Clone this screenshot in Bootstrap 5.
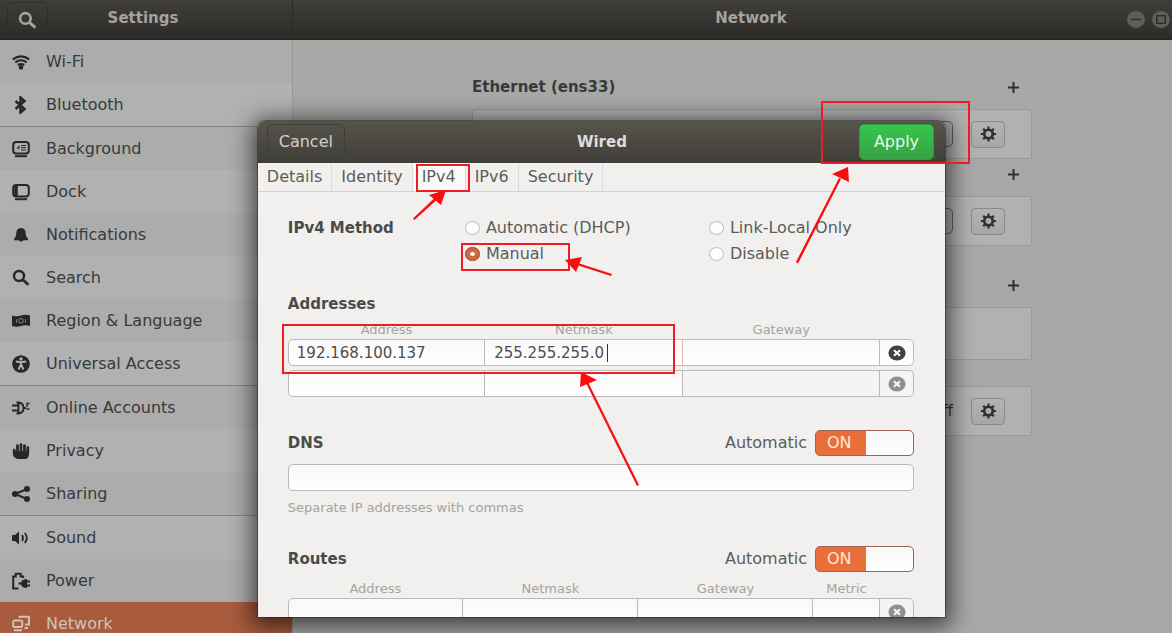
<!DOCTYPE html>
<html lang="en">
<head>
<meta charset="utf-8">
<meta name="viewport" content="width=device-width, initial-scale=1">
<title>Settings - Network</title>
<link href="https://cdn.jsdelivr.net/npm/bootstrap@5.3.0/dist/css/bootstrap.min.css" rel="stylesheet">
<style>
  body { font-family: "DejaVu Sans", "Noto Sans", sans-serif; font-size: 16px; line-height: 26px; color: #38393a; background: #a8a8a6; }
  .titlebar { height: 40px; background: linear-gradient(#403e39, #2c2b28); border-bottom: 1px solid #23221f; color: #a5a39d; }
  .titlebar .split { border-right: 1px solid #2b2a27; padding-left: 7px; }
  .titlebar h1, .titlebar h2, .dlg-head h2 { font-size: 15px; line-height: 26px; font-weight: 700; }
  .titlebar h1 { padding: 0 54px 8px 0; }
  .titlebar h1, .titlebar h2 { padding-bottom: 4px; }
  .titlebar h2 { padding-left: 82px; }
  .find-btn { width: 41px; height: 36px; border: 1px solid #2f2e2a; border-radius: 5px; color: #a5a39d; background: none; }
  .win-btn { width: 18px; height: 17px; border-radius: 50%; border: 0; background: #5f5d58; color: #2d2c28; }
  .wins { gap: 7px; padding-right: 2px; }
  .side { background: #b1b1b1; border-right: 1px solid #999997; }
  .side a { height: 43px; padding: 0 12px; gap: 16px; color: #38393a; text-decoration: none; }
  .side a:nth-of-type(odd) { background: #acacac; }
  .side a svg { width: 18px; height: 18px; flex: none; color: #252627; }
  .side hr { margin: 0; border-top: 1px solid #858585; opacity: 1; }
  .side a.current { background: #a85b3d; color: #d0c2bb; }
  .side a.current svg { color: #d0c2bb; }
  .pane { padding: 34px 0 0 39px; }
  .pane-in { width: 560px; }
  .sec-head { height: 35px; padding-right: 9px; }
  .sec-head h3 { font-size: 15px; line-height: 26px; font-weight: 700; }
  .near { margin-top: 2px; }
  .far { margin-top: 26px; }
  .plus-btn { width: 20px; height: 20px; border: 0; background: none; color: #303030; }
  .panel { height: 50px; background: #b1b1b1; border: 1px solid #999997; border-radius: 2px; padding-right: 26px; gap: 18px; }
  .panel.tall { height: 53px; }
  .gear-btn { width: 34px; height: 27px; border: 1px solid #8a8a88; border-radius: 4px; background: linear-gradient(#b3b3b2, #a7a7a6); color: #303030; }
  .gear-btn svg { width: 17px; height: 16px; }
  .dim-switch { appearance: none; width: 99px; height: 26px; margin: 0; border: 1px solid #6b5c59; border-radius: 5px; background: #adadac; }
  .overlay { top: 121px; bottom: 16px; left: 22%; right: 227px; }
  .dlg { height: 100%; background: #f1f0ee; border-radius: 7px 7px 0 0; box-shadow: 0 4px 22px 6px rgba(0,0,0,.6), 0 0 0 1px rgba(60,60,56,.5); }
  .dlg-head { height: 42px; padding: 0 11px 0 9px; background: linear-gradient(#57544b, #403e39); color: #e0ddd7; }
  .cancel-btn, .apply-btn { height: 36px; font-size: 16px; line-height: 24px; border-radius: 5px; }
  .cancel-btn { width: 78px; border: 1px solid #403e38; color: #d3d0c9; background: none; }
  .apply-btn { width: 75px; border: 1px solid #309a40; color: #e9f8ea; background: linear-gradient(#36c64c, #37a146); }
  .tabs { height: 29px; border-bottom: 1px solid #d5d3d0; }
  .tabs button { border: 0; border-right: 1px solid #dddbd8; background: none; padding: 0 9px; color: #5c5d5b; line-height: 28px; }
  .tabs button.on { background: #fafafa; }
  .sheet { padding: 23px 31px 0 30px; color: #5b5c5a; }
  .sheet h3 { font-size: 15px; line-height: 26px; font-weight: 700; color: #4a4b49; margin: 0; }
  .method { display: grid; grid-template-columns: 177fr 244fr 205fr; }
  .method label { gap: 6px; }
  .method input { appearance: none; width: 15px; height: 14px; margin: 0; border: 1px solid #c4c2be; border-radius: 50%; background: #fdfdfd; }
  .method input:checked { border: 5px solid #c96a3f; outline: 1px solid #b05a34; outline-offset: -1px; }
  .sheet h3.gap-sec { margin-top: 24px; }
  .row-sec { margin-top: 29px; }
  .addr, .routes { display: grid; }
  .addr { grid-template-columns: 1fr 1fr 1fr 34px; }
  .routes { grid-template-columns: 1fr 1fr 1fr 67px 34px; }
  .heads { font-size: 13px; line-height: 18px; color: #a3a49d; text-align: center; }
  .hint { font-size: 13px; line-height: 18px; color: #a3a49d; }
  .cells > *, .dns-in { min-width: 0; width: 100%; height: 27px; border: 1px solid #bcbab6; background: linear-gradient(#f8f8f8, #fff); color: #4c4d4c; padding: 0 8px; font-size: 15px; }
  .cells > * + * { border-left: 0; }
  .cells > :first-child { border-radius: 5px 0 0 5px; }
  .cells > :last-child { border-radius: 0 5px 5px 0; padding: 0; color: #3f4040; }
  .cells > .off { background: #f4f4f4; }
  .cells > .off:last-child { color: #8f8f8d; }
  .cells > .hot { border-color: #eeb49d; padding: 0; }
  .hot input { display: block; border: 0; background: none; width: 100%; height: 25px; padding: 0 9px; color: #4c4d4c; font-size: 15px; }
  .hot input:focus { outline: 0; }
  .caret { left: 122px; top: 4px; width: 1px; height: 18px; background: #333; }
  .dns-in { border-radius: 5px; }
  .sw input { appearance: none; display: block; margin: 0; width: 99px; height: 26px; border: 1px solid #9a6650; border-radius: 5px; background: linear-gradient(#f7f7f6, #fff) right / 47px 100% no-repeat, #e96f3a; }
  .sw span { left: 12px; top: 0; color: #fbe6da; }
  .notes { pointer-events: none; overflow: visible; fill: none; stroke: #ee1c25; stroke-width: 2; }
  .notes path { fill: #fb0d0d; stroke: none; }
</style>
</head>
<body class="vh-100 overflow-hidden">
<svg class="d-none">
  <symbol id="gear" viewBox="0 0 18 18"><circle cx="9" cy="9" r="4.800" fill="none" stroke="currentColor" stroke-width="3"/><g stroke="currentColor" stroke-width="2.400"><path d="M9 .5v3M9 14.500v3M.5 9h3M14.500 9h3M3 3l2.200 2.200M12.800 12.800L15 15M3 15l2.200-2.200M12.800 5.200L15 3"/></g></symbol>
  <symbol id="plus" viewBox="0 0 14 14"><path d="M7 1v12M1 7h12" stroke="currentColor" stroke-width="2.200"/></symbol>
  <symbol id="lens" viewBox="0 0 18 18"><circle cx="7" cy="7" r="5" fill="none" stroke="currentColor" stroke-width="2.400"/><path d="M10.800 10.800l5.600 5" stroke="currentColor" stroke-width="2.800"/></symbol>
  <symbol id="del" viewBox="0 0 18 16"><ellipse cx="9" cy="8" rx="8.600" ry="7.500" fill="currentColor"/><path d="M6 5.300l6 5.400M12 5.300l-6 5.400" stroke="#f6f6f6" stroke-width="2.200"/></symbol>
</svg>
<div class="d-flex flex-column h-100">
  <header class="titlebar d-flex flex-shrink-0">
    <div class="col-3 split d-flex align-items-center">
      <button class="find-btn p-0" type="button" aria-label="Search"><svg width="19" height="19"><use href="#lens"/></svg></button>
      <h1 class="m-0 flex-fill text-center">Settings</h1>
    </div>
    <div class="flex-fill d-flex align-items-center">
      <h2 class="m-0 flex-fill text-center">Network</h2>
      <div class="wins d-flex">
        <button class="win-btn p-0 d-flex" type="button" aria-label="Minimize"><svg viewBox="0 0 19 17"><path d="M4.500 8.500h10" stroke="currentColor" stroke-width="1.500"/></svg></button>
        <button class="win-btn p-0 d-flex" type="button" aria-label="Maximize"><svg viewBox="0 0 19 17"><rect x="5" y="4.500" width="9" height="8" fill="none" stroke="currentColor" stroke-width="1.500"/></svg></button>
      </div>
    </div>
  </header>
  <div class="d-flex flex-fill overflow-hidden">
    <nav class="side col-3">
      <a class="d-flex align-items-center" href="#"><svg viewBox="0 0 18 18" fill="none" stroke="currentColor" stroke-width="2.100"><path d="M.8 6.400Q9 .4 17.200 6.400M3.300 9.300q5.700-4 11.400 0M5.800 12q3.200-2 6.400 0"/><circle cx="9" cy="14.300" r="1.300" fill="currentColor"/></svg>Wi-Fi</a>
      <a class="d-flex align-items-center" href="#"><svg viewBox="0 0 18 18" fill="none" stroke="currentColor" stroke-width="2.500"><path d="M3.500 5l9 8-4 3.500V1.500l4 3.500-9 8"/></svg>Bluetooth</a>
      <hr>
      <a class="d-flex align-items-center" href="#"><svg viewBox="0 0 18 18" fill="none" stroke="currentColor" stroke-width="2"><rect x="1.200" y="2" width="15.600" height="11.500" rx="3"/><path d="M3 16.200h12"/><path d="M5 9l2-3v3M9 5.500h5M9 7.700h5M9 10h5" stroke-width="1"/></svg>Background</a>
      <a class="d-flex align-items-center" href="#"><svg viewBox="0 0 18 18" fill="none" stroke="currentColor" stroke-width="2"><rect x="1.200" y="2" width="15.600" height="11.500" rx="3"/><path d="M3 16.200h12"/><path d="M4 3v10" stroke-width="3.500"/></svg>Dock</a>
      <a class="d-flex align-items-center" href="#"><svg viewBox="0 0 18 18" fill="currentColor"><path d="M9 2c3.800 0 4.600 3 4.800 6 .1 2.500.9 3.500 2.200 4.800v1.400h-4.500Q9 17 6.500 14.200H2v-1.400C3.300 11.500 4.100 10.500 4.200 8c.2-3 1-6 4.800-6z"/></svg>Notifications</a>
      <a class="d-flex align-items-center" href="#"><svg><use href="#lens"/></svg>Search</a>
      <a class="d-flex align-items-center" href="#"><svg viewBox="0 0 18 18"><path d="M0 3.500q4 1.500 9 0t9 0v10.500q-4-1.500-9 0t-9 0z" fill="currentColor"/><circle cx="9" cy="8.800" r="2.300" fill="none" stroke="#888"/><path d="M4.500 7v4M13.500 7v4" stroke="#777"/></svg>Region &amp; Language</a>
      <a class="d-flex align-items-center" href="#"><svg viewBox="0 0 18 18"><circle cx="9" cy="9" r="8.800" fill="currentColor"/><circle cx="9" cy="4" r="1.700" fill="#b1b1b1"/><path d="M3.800 6.500L9 7.200l5.200-.7M9 7v3.500M9 9.500l-2.500 5M9 9.500l2.500 5" stroke="#b1b1b1" stroke-width="2" fill="none"/></svg>Universal Access</a>
      <hr>
      <a class="d-flex align-items-center" href="#"><svg viewBox="0 0 18 18" fill="none" stroke="currentColor" stroke-width="1.900"><path d="M4.500 3.500h2q5 .5 5 5.500t-5 5.500h-2M6.500 3v12M0 6.500h6M0 11.500h6M11 9h3"/><path d="M17.500 4.500H15V8M17.500 10h-3" stroke-width="1.400"/></svg>Online Accounts</a>
      <a class="d-flex align-items-center" href="#"><svg viewBox="0 0 18 18" fill="none" stroke="currentColor" stroke-width="2.700" stroke-linecap="round"><path d="M5.500 10V3.500M9 10V2.500M12.500 10V3.500M15.800 11V5.500M2.200 8v4"/><path d="M1 9h16v4q-1 4-4 4H6q-4-1-5-4z" fill="currentColor" stroke="none"/></svg>Privacy</a>
      <a class="d-flex align-items-center" href="#"><svg viewBox="0 0 18 18" fill="currentColor"><path d="M15 4L3 9l12 5" fill="none" stroke="currentColor" stroke-width="2"/><circle cx="3" cy="9" r="3"/><circle cx="15" cy="4" r="3"/><circle cx="15" cy="14" r="3"/></svg>Sharing</a>
      <hr>
      <a class="d-flex align-items-center" href="#"><svg viewBox="0 0 18 18" fill="none" stroke="currentColor" stroke-width="1.800"><path d="M0 6h3l4-3.500v13L3 12H0z" fill="currentColor" stroke="none"/><path d="M10 6q2 3 0 6M12.800 4q4 5 0 10"/></svg>Sound</a>
      <a class="d-flex align-items-center" href="#"><svg viewBox="0 0 18 18" fill="none" stroke="currentColor" stroke-width="2"><path d="M6.500 16.500H1.200V4.500h2.500V1.800h5v2.700h2.500V6"/><path d="M15 7v9q-5 0-6-3.500H6.500v-2H9Q10 7 15 7z" fill="currentColor" stroke="none"/><path d="M14 9.500h4M14 13.500h4" stroke-width="1.800"/></svg>Power</a>
      <a class="d-flex align-items-center current" href="#"><svg viewBox="0 0 18 18" fill="none" stroke="currentColor" stroke-width="2"><rect x="1.200" y="5.500" width="9" height="6.500" rx="1.500"/><path d="M7.500 3V1.800H17V9.500h-4M2 15.200h8M12.500 13h3.500"/></svg>Network</a>
    </nav>
    <main class="pane flex-fill">
      <div class="pane-in mx-auto">
        <div class="sec-head d-flex justify-content-between"><h3 class="m-0">Ethernet (ens33)</h3><button class="plus-btn p-0" type="button" aria-label="Add Ethernet profile"><svg width="13" height="13"><use href="#plus"/></svg></button></div>
        <div class="panel d-flex align-items-center justify-content-end"><input class="dim-switch" type="checkbox" role="switch" aria-label="Ethernet connection"><button class="gear-btn p-0 d-flex align-items-center justify-content-center" type="button" aria-label="Ethernet options"><svg><use href="#gear"/></svg></button></div>
        <div class="sec-head near d-flex justify-content-end"><button class="plus-btn p-0" type="button" aria-label="Add connection"><svg width="13" height="13"><use href="#plus"/></svg></button></div>
        <div class="panel d-flex align-items-center justify-content-end"><input class="dim-switch" type="checkbox" role="switch" aria-label="Second connection"><button class="gear-btn p-0 d-flex align-items-center justify-content-center" type="button" aria-label="Connection options"><svg><use href="#gear"/></svg></button></div>
        <div class="sec-head far d-flex justify-content-end"><button class="plus-btn p-0" type="button" aria-label="Add VPN"><svg width="13" height="13"><use href="#plus"/></svg></button></div>
        <div class="panel tall"></div>
        <div class="panel far d-flex align-items-center justify-content-end"><span>Off</span><button class="gear-btn p-0 d-flex align-items-center justify-content-center" type="button" aria-label="Proxy options"><svg><use href="#gear"/></svg></button></div>
      </div>
    </main>
  </div>
</div>

<div class="overlay position-absolute">
  <form class="dlg overflow-hidden" role="dialog" aria-label="Wired">
    <div class="dlg-head d-flex align-items-center justify-content-between">
      <button class="cancel-btn p-0" type="button">Cancel</button>
      <h2 class="m-0">Wired</h2>
      <button class="apply-btn p-0" type="button">Apply</button>
    </div>
    <div class="tabs d-flex" role="tablist">
      <button type="button" role="tab">Details</button><button type="button" role="tab">Identity</button><button class="on" type="button" role="tab" aria-selected="true">IPv4</button><button type="button" role="tab">IPv6</button><button type="button" role="tab">Security</button>
    </div>
    <div class="sheet">
      <div class="method">
        <h3>IPv4 Method</h3>
        <div>
          <label class="d-flex align-items-center"><input type="radio" name="m">Automatic (DHCP)</label>
          <label class="d-flex align-items-center"><input type="radio" name="m" checked>Manual</label>
        </div>
        <div>
          <label class="d-flex align-items-center"><input type="radio" name="m">Link-Local Only</label>
          <label class="d-flex align-items-center"><input type="radio" name="m">Disable</label>
        </div>
      </div>
      <h3 class="gap-sec">Addresses</h3>
      <div class="addr heads mt-1"><span>Address</span><span>Netmask</span><span>Gateway</span></div>
      <div class="addr cells">
        <input type="text" aria-label="Address 1" value="192.168.100.137">
        <div class="hot position-relative"><input type="text" aria-label="Netmask 1" value="255.255.255.0"><span class="caret position-absolute"></span></div>
        <input type="text" aria-label="Gateway 1">
        <button type="button" aria-label="Delete address 1" class="d-flex align-items-center justify-content-center"><svg width="18" height="16"><use href="#del"/></svg></button>
      </div>
      <div class="addr cells mt-1">
        <input type="text" aria-label="Address 2">
        <input type="text" aria-label="Netmask 2">
        <input class="off" type="text" aria-label="Gateway 2">
        <button type="button" aria-label="Delete address 2" class="off d-flex align-items-center justify-content-center"><svg width="18" height="16"><use href="#del"/></svg></button>
      </div>
      <div class="row-sec d-flex justify-content-between pt-1">
        <h3>DNS</h3>
        <label class="d-flex gap-2">Automatic <span class="sw position-relative d-block"><input type="checkbox" role="switch" checked><span class="position-absolute">ON</span></span></label>
      </div>
      <input class="dns-in mt-2 d-block" type="text" aria-label="DNS servers">
      <div class="hint mt-2">Separate IP addresses with commas</div>
      <div class="row-sec d-flex justify-content-between">
        <h3>Routes</h3>
        <label class="d-flex gap-2">Automatic <span class="sw position-relative d-block"><input type="checkbox" role="switch" checked><span class="position-absolute">ON</span></span></label>
      </div>
      <div class="routes heads mt-2"><span>Address</span><span>Netmask</span><span>Gateway</span><span>Metric</span></div>
      <div class="routes cells">
        <input type="text" aria-label="Route address">
        <input type="text" aria-label="Route netmask">
        <input type="text" aria-label="Route gateway">
        <input type="text" aria-label="Route metric">
        <button type="button" aria-label="Delete route" class="off d-flex align-items-center justify-content-center"><svg width="18" height="16"><use href="#del"/></svg></button>
      </div>
    </div>
  </form>
  <svg class="notes position-absolute top-0 start-0" width="687" height="496" viewBox="258 121 687 496" aria-hidden="true">
    <rect x="822" y="102" width="147" height="61"/>
    <rect x="417" y="165" width="52" height="26"/>
    <rect x="462" y="244" width="107" height="26"/>
    <rect x="283" y="325" width="391" height="48"/>
    <path d="M446 190l-17 5 12 10zM565 260l17-3-6 15zM848 167l-16 7 17 8zM581 372l-1 15 17-7z"/>
    <path d="M413 218.500l21-20 2 2-21.500 19.500zM612 274l-34-11-1 2 34 11zM796 262l43-84 2 1-43 84.500zM637 486l-51-103 2-1 51 103z"/>
  </svg>
</div>
<script src="https://cdn.jsdelivr.net/npm/bootstrap@5.3.0/dist/js/bootstrap.bundle.min.js"></script>
</body>
</html>
